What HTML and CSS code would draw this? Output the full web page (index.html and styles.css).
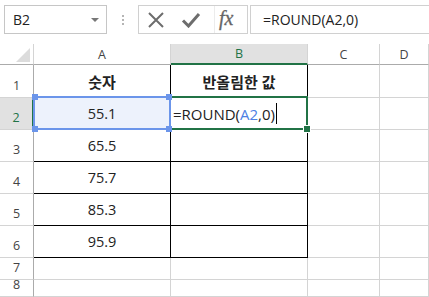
FILE: index.html
```html
<!DOCTYPE html>
<html lang="ko">
<head>
  <meta charset="UTF-8" />
  <title>ROUND</title>
  <link rel="stylesheet" href="styles.css">
</head>
<body>
  <div class="formula-bar">
    <div class="name-box">
      <span>B2</span>
      <span class="arrow"></span>
    </div>
    <div class="grip"><i></i><i></i><i></i></div>
    <div class="buttons">
      <svg class="btn-x" width="18" height="16" viewBox="0 0 18 16">
        <path d="M2 1 L16 15 M16 1 L2 15" stroke="#6d6d6d" stroke-width="2" fill="none" />
      </svg>
      <svg class="btn-ok" width="20" height="16" viewBox="0 0 20 16">
        <path d="M2 8.5 L7.5 14 L18 2" stroke="#6d6d6d" stroke-width="3" fill="none" />
      </svg>
      <span class="fx">fx</span>
    </div>
    <div class="formula">=ROUND(A2,0)</div>
  </div>

  <div class="sheet">
    <div class="corner"><span class="tri"></span></div>
    <div class="col-head">A</div>
    <div class="col-head sel">B</div>
    <div class="col-head">C</div>
    <div class="col-head">D</div>

    <div class="row-head">1</div>
    <div class="cell box title">숫자</div>
    <div class="cell box title">반올림한 값</div>
    <div class="cell"></div>
    <div class="cell"></div>

    <div class="row-head sel">2</div>
    <div class="cell box ref">55.1</div>
    <div class="cell box edit">=ROUND(<span class="ref-txt">A2</span>,0)<span class="caret"></span></div>
    <div class="cell"></div>
    <div class="cell"></div>

    <div class="row-head">3</div>
    <div class="cell box">65.5</div>
    <div class="cell box"></div>
    <div class="cell"></div>
    <div class="cell"></div>

    <div class="row-head">4</div>
    <div class="cell box">75.7</div>
    <div class="cell box"></div>
    <div class="cell"></div>
    <div class="cell"></div>

    <div class="row-head">5</div>
    <div class="cell box">85.3</div>
    <div class="cell box"></div>
    <div class="cell"></div>
    <div class="cell"></div>

    <div class="row-head">6</div>
    <div class="cell box">95.9</div>
    <div class="cell box"></div>
    <div class="cell"></div>
    <div class="cell"></div>

    <div class="row-head">7</div>
    <div class="cell"></div>
    <div class="cell"></div>
    <div class="cell"></div>
    <div class="cell"></div>

    <div class="row-head">8</div>
    <div class="cell"></div>
    <div class="cell"></div>
    <div class="cell"></div>
    <div class="cell"></div>

    <!-- selection overlays -->
    <div class="ref-frame">
      <span class="knob k1"></span><span class="knob k2"></span>
      <span class="knob k3"></span><span class="knob k4"></span>
    </div>
    <div class="active-frame"><span class="handle"></span></div>
  </div>
</body>
</html>
```

FILE: styles.css
```css
* {
  box-sizing: border-box;
}
body {
  margin: 0;
  background: #fff;
  font-family: "Open Sans", "Noto Sans CJK KR", sans-serif;
  color: #222;
  overflow: hidden;
}

/* formula bar */
.formula-bar {
  display: flex;
  align-items: stretch;
  height: 29px;
  margin-top: 5px;
  margin-left: 4px;
}
.name-box {
  width: 103px;
  border: 1px solid #c6c6c6;
  display: flex;
  align-items: center;
  justify-content: space-between;
  padding: 0 7px 0 8px;
  font-size: 14px;
  color: #222;
}
.arrow {
  width: 0;
  height: 0;
  border-left: 4px solid transparent;
  border-right: 4px solid transparent;
  border-top: 4px solid #777;
  margin-top: 1px;
}
.grip {
  width: 31px;
  display: flex;
  flex-direction: column;
  align-items: center;
  justify-content: center;
  gap: 2px;
}
.grip i {
  width: 2px;
  height: 2px;
  background: #b5b5b5;
}
.buttons {
  width: 110px;
  border: 1px solid #d0d0d0;
  display: flex;
  align-items: center;
  padding-left: 8px;
}
.btn-x {
  margin-right: 16px;
}
.btn-ok {
  margin-right: 13px;
}
.fx {
  font-family: "Liberation Serif", serif;
  font-style: italic;
  font-size: 20px;
  color: #666;
  border-left: 1px solid #ececec;
  padding-left: 4px;
  height: 27px;
  line-height: 25px;
  -webkit-text-stroke: 0.3px #666;
}
.formula {
  flex: 1;
  margin-left: 2px;
  border: 1px solid #d0d0d0;
  border-right: none;
  font-size: 14px;
  line-height: 27px;
  padding-left: 12px;
  color: #222;
}

/* grid */
.sheet {
  position: relative;
  margin-top: 10px;
  display: grid;
  grid-template-columns: 34px 137px 137px 72px 1fr;
  grid-template-rows: 21px 33px 32px 32px 32px 32px 32px 22px 17px;
}
.corner {
  position: relative;
  border-right: 1px solid #d4d4d4;
  border-bottom: 1px solid #ababab;
}
.tri {
  position: absolute;
  right: 3px;
  bottom: 2px;
  width: 0;
  height: 0;
  border-left: 14px solid transparent;
  border-bottom: 14px solid #dcdcdc;
}
.col-head {
  border-right: 1px solid #d4d4d4;
  border-bottom: 1px solid #ababab;
  display: flex;
  align-items: center;
  justify-content: center;
  font-size: 12.5px;
  color: #444;
}
.col-head.sel {
  background: #e1e1e1;
  border-bottom: 2px solid #217346;
  color: #217346;
}
.row-head {
  border-right: 1px solid #ababab;
  border-bottom: 1px solid #d4d4d4;
  display: flex;
  align-items: flex-end;
  justify-content: center;
  padding-bottom: 3px;
  font-size: 12.5px;
  color: #444;
}
.row-head:last-of-type {
  border-bottom: none;
  padding-bottom: 0;
}
.row-head.sel {
  background: #e1e1e1;
  border-right: 2px solid #217346;
  color: #217346;
}
.cell {
  border-right: 1px solid #d4d4d4;
  border-bottom: 1px solid #d4d4d4;
  display: flex;
  align-items: center;
  font-size: 14.5px;
  white-space: nowrap;
}
.cell.box {
  border-right-color: #000;
  border-bottom-color: #000;
  justify-content: center;
}
.cell.title {
  font-weight: bold;
  font-size: 15px;
}
.cell.ref {
  background: #edf2fc;
}
.cell.edit {
  justify-content: flex-start;
  padding-left: 2px;
  font-size: 15px;
}
.ref-txt {
  color: #4d80e4;
}
.caret {
  display: inline-block;
  width: 1px;
  height: 21px;
  background: #000;
  margin-left: 1px;
}

/* selection overlays */
.ref-frame {
  position: absolute;
  left: 33px;
  top: 52px;
  width: 138px;
  height: 34px;
  border: 2px solid #6b95ea;
  z-index: 2;
}
.knob {
  position: absolute;
  width: 6px;
  height: 6px;
  background: #6b95ea;
}
.k1 { left: -3px; top: -4px; }
.k2 { right: -3px; top: -4px; }
.k3 { left: -3px; bottom: -4px; }
.k4 { right: -3px; bottom: -4px; }
.active-frame {
  position: absolute;
  left: 169px;
  top: 52px;
  width: 139px;
  height: 34px;
  border: 2px solid #217346;
  z-index: 1;
}
.handle {
  position: absolute;
  right: -4px;
  bottom: -4px;
  width: 6px;
  height: 6px;
  background: #217346;
  outline: 1px solid #fff;
}
```
